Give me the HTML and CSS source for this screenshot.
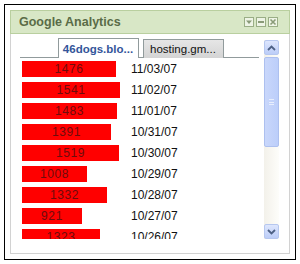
FILE: index.html
```html
<!DOCTYPE html>
<html lang="en">
<head>
  <meta charset="UTF-8" />
  <title>Google Analytics gadget</title>
  <link rel="stylesheet" href="styles.css">
</head>
<body>

  <div class="frame">
    <div class="gadget">

      <!-- title bar -->
      <div class="gadget-head">
        <span class="gadget-title">Google Analytics</span>
        <div class="head-icons">
          <span class="head-icon">
            <svg width="8" height="8" viewBox="0 0 8 8"><path d="M1 2.5h6L4 6z" fill="#8a9b78"/></svg>
          </span>
          <span class="head-icon">
            <svg width="8" height="8" viewBox="0 0 8 8"><rect x="1" y="3" width="6" height="2" fill="#8a9b78"/></svg>
          </span>
          <span class="head-icon">
            <svg width="8" height="8" viewBox="0 0 8 8"><path d="M1.5 1.5l5 5M6.5 1.5l-5 5" stroke="#8a9b78" stroke-width="1.6"/></svg>
          </span>
        </div>
      </div>

      <div class="gadget-body">
        <div class="main-col">
          <!-- tabs -->
          <div class="tabs">
            <span class="tab active">46dogs.blo...</span>
            <span class="tab">hosting.gm...</span>
          </div>

          <!-- visits per day -->
          <div class="visits">
            <div class="visit-row">
              <div class="bar-cell"><span class="bar" style="width: 94px">1476</span></div>
              <span class="date">11/03/07</span>
            </div>
            <div class="visit-row">
              <div class="bar-cell"><span class="bar" style="width: 98px">1541</span></div>
              <span class="date">11/02/07</span>
            </div>
            <div class="visit-row">
              <div class="bar-cell"><span class="bar" style="width: 95px">1483</span></div>
              <span class="date">11/01/07</span>
            </div>
            <div class="visit-row">
              <div class="bar-cell"><span class="bar" style="width: 89px">1391</span></div>
              <span class="date">10/31/07</span>
            </div>
            <div class="visit-row">
              <div class="bar-cell"><span class="bar" style="width: 97px">1519</span></div>
              <span class="date">10/30/07</span>
            </div>
            <div class="visit-row">
              <div class="bar-cell"><span class="bar" style="width: 65px">1008</span></div>
              <span class="date">10/29/07</span>
            </div>
            <div class="visit-row">
              <div class="bar-cell"><span class="bar" style="width: 85px">1332</span></div>
              <span class="date">10/28/07</span>
            </div>
            <div class="visit-row">
              <div class="bar-cell"><span class="bar" style="width: 60px">921</span></div>
              <span class="date">10/27/07</span>
            </div>
            <div class="visit-row">
              <div class="bar-cell"><span class="bar" style="width: 78px">1323</span></div>
              <span class="date">10/26/07</span>
            </div>
          </div>
        </div>

        <!-- fake XP scrollbar -->
        <div class="scrollbar">
          <span class="scroll-btn">
            <svg width="9" height="6" viewBox="0 0 9 6"><path d="M1 5l3.5-3.5L8 5" fill="none" stroke="#4d6185" stroke-width="1.8"/></svg>
          </span>
          <div class="scroll-track">
            <div class="scroll-thumb">
              <span class="grip"></span>
            </div>
          </div>
          <span class="scroll-btn">
            <svg width="9" height="6" viewBox="0 0 9 6"><path d="M1 1l3.5 3.5L8 1" fill="none" stroke="#4d6185" stroke-width="1.8"/></svg>
          </span>
        </div>
      </div>

    </div>
  </div>

</body>
</html>
```

FILE: styles.css
```css
* {
  margin: 0;
  padding: 0;
  box-sizing: border-box;
}

body {
  background: #fff;
  font-family: "Liberation Sans", Arial, sans-serif;
  font-size: 12px;
  color: #111;
}

/* black outline round the whole shot */
.frame {
  margin: 4px;
  width: 292px;
  height: 256px;
  border: 1px solid #000;
  padding: 5px;
}

.gadget {
  width: 280px;
  height: 244px;
  display: flex;
  flex-direction: column;
}

/* title bar */
.gadget-head {
  height: 24px;
  display: flex;
  align-items: center;
  justify-content: space-between;
  padding: 0 11px 0 8px;
  background: #d8e7c6;
  border: 1px solid #b9cf9f;
}

.gadget-title {
  font-weight: bold;
  font-size: 12.5px;
  color: #5a6c47;
}

.head-icons {
  display: flex;
  gap: 2px;
}

.head-icon {
  width: 10px;
  height: 10px;
  display: flex;
  align-items: center;
  justify-content: center;
  background: #eef4e6;
  border: 1px solid #9aae86;
}

/* body */
.gadget-body {
  flex: 1;
  display: flex;
  gap: 5px;
  padding: 4px 10px 0 9px;
  border: 1px solid #d2d2d2;
  border-top: none;
}

.main-col {
  width: 239px;
  display: flex;
  flex-direction: column;
}

.tabs {
  height: 20px;
  display: flex;
  justify-content: center;
  gap: 4px;
  padding-left: 2px;
  border-bottom: 1px solid #919b9c;
}

.tab {
  width: 81px;
  height: 19px;
  margin-top: 1px;
  display: flex;
  align-items: center;
  justify-content: center;
  font-size: 11.5px;
  color: #111;
  background: linear-gradient(180deg, #e6e6e6 0%, #d4d4d4 100%);
  border: 1px solid #919b9c;
  border-bottom: none;
}

.tab.active {
  height: 20px;
  margin-top: 0;
  margin-bottom: -1px;
  background: #fff;
  color: #33559a;
  font-weight: bold;
}

/* visits list */
.visits {
  height: 181px;
  overflow: hidden;
  padding: 3px 0 0 2px;
}

.visit-row {
  height: 16px;
  margin-bottom: 5px;
  display: flex;
  align-items: center;
}

.bar-cell {
  width: 109px;
}

.bar {
  display: block;
  height: 16px;
  line-height: 16px;
  background: #ff0000;
  color: #6e0c0c;
  text-align: center;
  letter-spacing: 0.6px;
}

.date {
  color: #111;
}

/* scrollbar */
.scrollbar {
  width: 15px;
  height: 199px;
  margin-top: 2px;
  display: flex;
  flex-direction: column;
  background: linear-gradient(90deg, #f3f1ea 0%, #fdfdfa 100%);
}

.scroll-btn {
  height: 15px;
  display: flex;
  align-items: center;
  justify-content: center;
  background: linear-gradient(180deg, #dde6fd 0%, #bccdf8 100%);
  border: 1px solid #b6c7ef;
  border-radius: 2px;
}

.scroll-track {
  flex: 1;
  padding-top: 2px;
}

.scroll-thumb {
  height: 90px;
  display: flex;
  align-items: center;
  justify-content: center;
  background: linear-gradient(90deg, #c9d7fb 0%, #bccefa 100%);
  border: 1px solid #adc0ef;
  border-radius: 2px;
}

.grip {
  width: 5px;
  height: 6px;
  border-top: 1px solid #e8eefd;
  border-bottom: 1px solid #e8eefd;
  background: linear-gradient(180deg, transparent 2px, #e8eefd 2px, #e8eefd 3px, transparent 3px);
}
```
